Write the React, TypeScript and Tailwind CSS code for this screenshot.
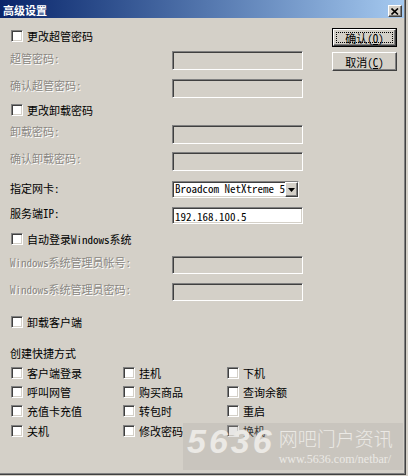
import React from "react";

const sunken =
  "border border-t-[#808080] border-l-[#808080] border-b-white border-r-white shadow-[inset_1px_1px_0_#404040,inset_-1px_-1px_0_#d4d0c8]";
const raised =
  "border border-t-white border-l-white border-b-[#404040] border-r-[#404040] shadow-[inset_-1px_-1px_0_#808080]";
const grayText = "text-[#8a8782] [text-shadow:1px_1px_0_#ffffff]";

function Check({ label }: { label: string }) {
  return (
    <div className="flex items-center h-[12px]">
      <div className={`w-[12px] h-[12px] shrink-0 ml-px bg-white ${sunken}`} />
      <span className="ml-[4px] text-[11px] leading-[12px] text-black whitespace-nowrap">{label}</span>
    </div>
  );
}

function Field({
  label,
  disabled,
  h,
  value,
  mt,
  pt,
}: {
  label: string;
  disabled?: boolean;
  h: string;
  value?: string;
  mt: string;
  pt?: string;
}) {
  return (
    <div className={`flex items-start ${mt}`}>
      <div
        className={`w-[162px] text-[11px] leading-[12px] whitespace-nowrap ${pt ?? ""} ${
          disabled ? grayText : "text-black"
        }`}
      >
        {label}
      </div>
      <div
        className={`w-[131px] ${h} ${sunken} ${
          disabled ? "bg-[#d4d0c8]" : "bg-white"
        } flex items-center text-[11px] leading-[12px] pl-[2px] text-black`}
      >
        {value}
      </div>
    </div>
  );
}

export default function App() {
  return (
    <div className="w-[408px] h-[476px] bg-[#d4d0c8] relative overflow-hidden font-['Noto_Sans_Mono_CJK_SC','Noto_Sans_CJK_SC',sans-serif]">
      <div className="w-[406px] h-[475px] border-r border-b border-[#404040] shadow-[inset_-1px_-1px_0_#808080] flex flex-col">
        {/* title bar */}
        <div className="h-[18px] w-[404px] bg-gradient-to-r from-[#0a246a] to-[#a6caf0] flex items-end justify-between pb-px pr-[2px] shrink-0">
          <span className="pl-[3px] pb-[1px] text-white font-bold text-[11px] leading-[12px] font-['Noto_Sans_CJK_SC',sans-serif]">
            高级设置
          </span>
          <div className={`w-[14px] h-[12px] bg-[#d4d0c8] ${raised} flex items-center justify-center`}>
            <svg width="8" height="7" viewBox="0 0 8 7">
              <path d="M0.5 0.5 L7 6.5 M7 0.5 L0.5 6.5" stroke="#000" strokeWidth="1.6" />
            </svg>
          </div>
        </div>

        <div className="flex">
          {/* left form */}
          <div className="w-[304px] pl-[10px] pt-[12px] flex flex-col">
            <Check label="更改超管密码" />
            <Field label="超管密码:" disabled h="h-[19px]" mt="mt-[9px]" pt="pt-px" />
            <Field label="确认超管密码:" disabled h="h-[19px]" mt="mt-[9px]" />
            <div className="mt-[6px]">
              <Check label="更改卸载密码" />
            </div>
            <Field label="卸载密码:" disabled h="h-[19px]" mt="mt-[9px]" />
            <Field label="确认卸载密码:" disabled h="h-[19px]" mt="mt-[8px]" />

            {/* select row */}
            <div className="flex items-start mt-[10px]">
              <div className="w-[162px] text-[11px] leading-[12px] text-black pt-px">指定网卡:</div>
              <div className={`w-[127px] h-[17px] bg-white ${sunken} flex items-stretch overflow-hidden`}>
                <span className="flex-1 overflow-hidden whitespace-nowrap text-[11px] leading-[13px] pl-[2px] text-black">
                  Broadcom NetXtreme 57
                </span>
                <div className={`w-[13px] shrink-0 bg-[#d4d0c8] ${raised} flex items-center justify-center`}>
                  <svg width="7" height="4" viewBox="0 0 7 4">
                    <path d="M0 0 H7 L3.5 4 Z" fill="#000" />
                  </svg>
                </div>
              </div>
            </div>

            <Field label="服务端IP:" h="h-[17px]" value="192.168.100.5" mt="mt-[9px]" />

            <div className="mt-[9px]">
              <Check label="自动登录Windows系统" />
            </div>
            <Field label="Windows系统管理员帐号:" disabled h="h-[18px]" mt="mt-[11px]" />
            <Field label="Windows系统管理员密码:" disabled h="h-[18px]" mt="mt-[9px]" />

            <div className="mt-[15px]">
              <Check label="卸载客户端" />
            </div>

            <div className="mt-[19px] text-[11px] leading-[12px] text-black">创建快捷方式</div>

            <div className="mt-[4px] grid grid-cols-[112px_104px_auto] auto-rows-[19.33px] items-center">
              <Check label="客户端登录" />
              <Check label="挂机" />
              <Check label="下机" />
              <Check label="呼叫网管" />
              <Check label="购买商品" />
              <Check label="查询余额" />
              <Check label="充值卡充值" />
              <Check label="转包时" />
              <Check label="重启" />
              <Check label="关机" />
              <Check label="修改密码" />
              <Check label="换机" />
            </div>
          </div>

          {/* right buttons */}
          <div className="ml-[28px] pt-[10px] flex flex-col gap-[5px]">
            <div className="w-[65px] h-[19px] border border-black bg-[#d4d0c8]">
              <div className={`w-full h-full ${raised} flex items-center justify-center p-[2px]`}>
                <div className="w-full h-full border border-dotted border-black flex items-center justify-center text-[11px] leading-[12px] text-black">
                  <span>
                    确认(<span className="underline">O</span>)
                  </span>
                </div>
              </div>
            </div>
            <div className={`w-[65px] h-[19px] bg-[#d4d0c8] ${raised} flex items-center justify-center text-[11px] leading-[12px] text-black`}>
              <span>
                取消(<span className="underline">C</span>)
              </span>
            </div>
          </div>
        </div>
      </div>

      {/* watermark overlay */}
      <div className="absolute left-[183px] top-[423px] w-[220px] h-[47px] bg-[rgba(175,172,168,0.3)] flex items-start pl-[4px] pt-[1px] text-[#ebe9e5]">
        <span className="font-['Liberation_Sans',sans-serif] font-bold italic text-[34px] leading-[34px] tracking-[3px]">
          5636
        </span>
        <div className="flex flex-col ml-[4px] pt-[3px]">
          <span className="font-['Noto_Sans_CJK_SC',sans-serif] font-light text-[19px] leading-[22px] whitespace-nowrap">
            网吧门户资讯
          </span>
          <span className="font-['Liberation_Serif',serif] text-[12px] leading-[14px] mt-[3px] whitespace-nowrap">
            www.5636.com/netbar/
          </span>
        </div>
      </div>
    </div>
  );
}
